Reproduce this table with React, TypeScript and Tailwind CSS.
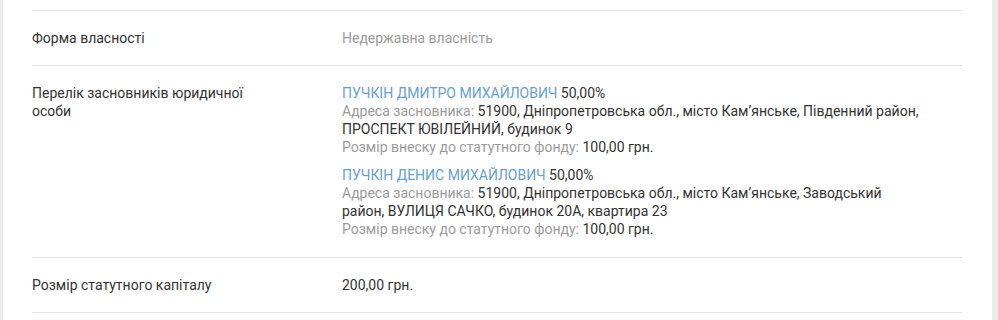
import React from 'react';

const founders = [
  {
    name: 'ПУЧКІН ДМИТРО МИХАЙЛОВИЧ',
    share: '50,00%',
    address: '51900, Дніпропетровська обл., місто Кам’янське, Південний район, ПРОСПЕКТ ЮВІЛЕЙНИЙ, будинок 9',
    amount: '100,00 грн.'
  },
  {
    name: 'ПУЧКІН ДЕНИС МИХАЙЛОВИЧ',
    share: '50,00%',
    address: '51900, Дніпропетровська обл., місто Кам’янське, Заводський район, ВУЛИЦЯ САЧКО, будинок 20А, квартира 23',
    amount: '100,00 грн.'
  }
];

const App = () => {
  return (
    <div className="flex h-[320px] w-[998px] bg-[#ececec] font-['Roboto',sans-serif] text-[14px] leading-[18px] text-[#333]">
      <div className="ml-[3px] w-[989px] bg-white pl-[29px] pr-[30px] pt-[10px]">
        <div className="border-t border-[#e3e3e3]">
          <div className="flex border-b border-[#e3e3e3] pt-[18px] pb-[18px]">
            <div className="w-[310px] shrink-0">Форма власності</div>
            <div className="text-[#9b9b9b]">Недержавна власність</div>
          </div>
          <div className="flex border-b border-[#e3e3e3] pt-[18px] pb-[19px]">
            <div className="w-[310px] shrink-0 pr-[80px]">Перелік засновників юридичної особи</div>
            <div className="flex w-[580px] flex-col gap-[10px]">
              {founders.map((item: any, ind: number) => {
                return (
                  <div key={'founder' + ind}>
                    <div>
                      <span className="text-[#649fd6]">{item.name}</span> {item.share}
                    </div>
                    <div>
                      <span className="text-[#9b9b9b]">Адреса засновника:</span> {item.address}
                    </div>
                    <div>
                      <span className="text-[#9b9b9b]">Розмір внеску до статутного фонду:</span> {item.amount}
                    </div>
                  </div>
                );
              })}
            </div>
          </div>
          <div className="flex border-b border-[#e3e3e3] pt-[18px] pb-[18px]">
            <div className="w-[310px] shrink-0">Розмір статутного капіталу</div>
            <div>200,00 грн.</div>
          </div>
        </div>
      </div>
    </div>
  );
};

export default App;
